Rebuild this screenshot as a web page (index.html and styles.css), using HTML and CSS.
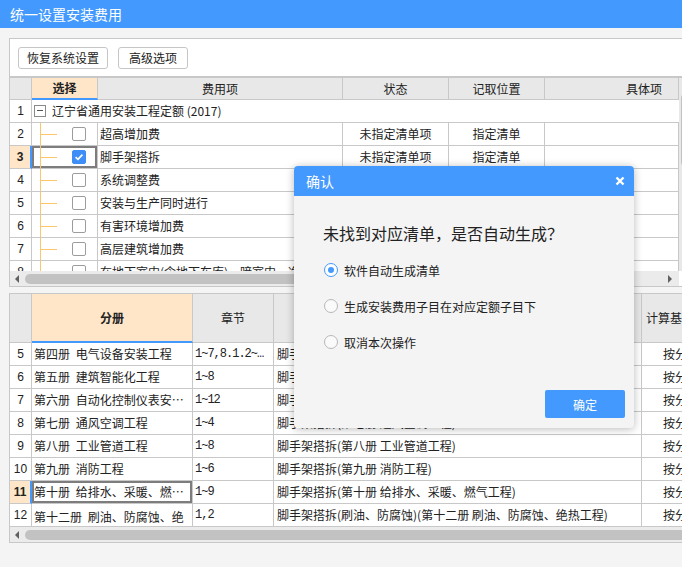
FILE: index.html
```html
<!DOCTYPE html>
<html lang="zh-CN">
<head>
<meta charset="utf-8">
<title>统一设置安装费用</title>
<link rel="stylesheet" href="styles.css">
</head>
<body>
<div class="titlebar">统一设置安装费用</div>
<div class="main">
  <section class="panel">
    <div class="toolbar">
      <button class="btn btn-wide">恢复系统设置</button>
      <button class="btn btn-narrow">高级选项</button>
    </div>
    <div class="grid-wrap top-wrap">
      <div class="grid top-grid">
        <div class="c h"></div>
        <div class="c h h-sel">选择</div>
        <div class="c h">费用项</div>
        <div class="c h">状态</div>
        <div class="c h">记取位置</div>
        <div class="c h h-right">具体项</div>

        <div class="c num">1</div>
        <div class="c span-row"><span class="minus"></span><span class="root-text">辽宁省通用安装工程定额 (2017)</span></div>

        <div class="c num">2</div>
        <div class="c tree"><span class="cb"></span></div>
        <div class="c name">超高增加费</div>
        <div class="c mid">未指定清单项</div>
        <div class="c mid">指定清单</div>
        <div class="c"></div>

        <div class="c num num-sel">3</div>
        <div class="c tree cell-sel"><span class="cb cb-on"><svg viewBox="0 0 14 14" width="12" height="12"><path d="M3 7.2 L5.8 9.8 L11 4.2" stroke="#fff" stroke-width="2" fill="none"/></svg></span></div>
        <div class="c name">脚手架搭拆</div>
        <div class="c mid">未指定清单项</div>
        <div class="c mid">指定清单</div>
        <div class="c"></div>

        <div class="c num">4</div>
        <div class="c tree"><span class="cb"></span></div>
        <div class="c name">系统调整费</div>
        <div class="c mid"></div>
        <div class="c mid"></div>
        <div class="c"></div>

        <div class="c num">5</div>
        <div class="c tree"><span class="cb"></span></div>
        <div class="c name">安装与生产同时进行</div>
        <div class="c mid"></div>
        <div class="c mid"></div>
        <div class="c"></div>

        <div class="c num">6</div>
        <div class="c tree"><span class="cb"></span></div>
        <div class="c name">有害环境增加费</div>
        <div class="c mid"></div>
        <div class="c mid"></div>
        <div class="c"></div>

        <div class="c num">7</div>
        <div class="c tree"><span class="cb"></span></div>
        <div class="c name">高层建筑增加费</div>
        <div class="c mid"></div>
        <div class="c mid"></div>
        <div class="c"></div>

        <div class="c num">8</div>
        <div class="c tree"><span class="cb"></span></div>
        <div class="c name">在地下室内(含地下车库)、暗室内、净高小于1.6m楼层</div>
        <div class="c mid"></div>
        <div class="c mid"></div>
        <div class="c"></div>
      </div>
      <div class="vscroll"><span class="v-up"></span><span class="v-thumb"></span></div>
    </div>
    <div class="hscroll top-h">
      <span class="arr-l"></span>
      <span class="h-thumb top-thumb"></span>
      <span class="h-fill"></span>
      <span class="arr-r"></span>
    </div>
  </section>

  <section class="panel bottom-panel">
    <div class="grid-wrap bottom-wrap">
      <div class="grid bottom-grid">
        <div class="c h"></div>
        <div class="c h h-sel">分册</div>
        <div class="c h">章节</div>
        <div class="c h">费用名称</div>
        <div class="c h h-left">计算基数</div>

        <div class="c num">5</div>
        <div class="c vol">第四册 电气设备安装工程</div>
        <div class="c chap">1~7,8.1.2~8.1.5,9~14</div>
        <div class="c fee">脚手架搭拆(第四册 电气设备安装工程)</div>
        <div class="c base">按分册计算</div>

        <div class="c num">6</div>
        <div class="c vol">第五册 建筑智能化工程</div>
        <div class="c chap">1~8</div>
        <div class="c fee">脚手架搭拆(第五册 建筑智能化工程)</div>
        <div class="c base">按分册计算</div>

        <div class="c num">7</div>
        <div class="c vol">第六册 自动化控制仪表安装工程</div>
        <div class="c chap">1~12</div>
        <div class="c fee">脚手架搭拆(第六册 自动化控制仪表安装工程)</div>
        <div class="c base">按分册计算</div>

        <div class="c num">8</div>
        <div class="c vol">第七册 通风空调工程</div>
        <div class="c chap">1~4</div>
        <div class="c fee">脚手架搭拆(第七册 通风空调工程)</div>
        <div class="c base">按分册计算</div>

        <div class="c num">9</div>
        <div class="c vol">第八册 工业管道工程</div>
        <div class="c chap">1~8</div>
        <div class="c fee">脚手架搭拆(第八册 工业管道工程)</div>
        <div class="c base">按分册计算</div>

        <div class="c num">10</div>
        <div class="c vol">第九册 消防工程</div>
        <div class="c chap">1~6</div>
        <div class="c fee">脚手架搭拆(第九册 消防工程)</div>
        <div class="c base">按分册计算</div>

        <div class="c num num-sel">11</div>
        <div class="c vol cell-sel">第十册 给排水、采暖、燃气工程</div>
        <div class="c chap">1~9</div>
        <div class="c fee">脚手架搭拆(第十册 给排水、采暖、燃气工程)</div>
        <div class="c base">按分册计算</div>

        <div class="c num">12</div>
        <div class="c vol vol-wrap">第十二册 刷油、防腐蚀、绝热工程</div>
        <div class="c chap">1,2</div>
        <div class="c fee">脚手架搭拆(刷油、防腐蚀)(第十二册 刷油、防腐蚀、绝热工程)</div>
        <div class="c base">按分册计算</div>
      </div>
    </div>
    <div class="hscroll bottom-h">
      <span class="arr-l"></span>
      <span class="h-thumb bottom-thumb"></span>
    </div>
  </section>
</div>

<div class="dialog">
  <div class="dlg-head">
    <span class="dlg-title">确认</span>
    <svg class="dlg-close" viewBox="0 0 10 10" width="10" height="10"><path d="M1.5 1.5 L8.5 8.5 M8.5 1.5 L1.5 8.5" stroke="#fff" stroke-width="2.4" fill="none"/></svg>
  </div>
  <div class="dlg-body">
    <p class="dlg-q">未找到对应清单，是否自动生成？</p>
    <ul class="dlg-opts">
      <li class="opt"><span class="radio radio-on"></span>软件自动生成清单</li>
      <li class="opt"><span class="radio"></span>生成安装费用子目在对应定额子目下</li>
      <li class="opt"><span class="radio"></span>取消本次操作</li>
    </ul>
  </div>
  <div class="dlg-foot"><button class="dlg-ok">确定</button></div>
</div>
</body>
</html>
```
FILE: styles.css
```css
* { box-sizing: border-box; }
html, body { margin: 0; padding: 0; }
body {
  width: 682px;
  height: 567px;
  overflow: hidden;
  position: relative;
  background: #f4f4f4;
  font-family: "Noto Sans CJK SC", "Liberation Sans", sans-serif;
  font-size: 12px;
  color: #222;
}
.titlebar {
  height: 28px;
  background: #4399fd;
  color: #fff;
  font-size: 14px;
  line-height: 28px;
  padding-left: 10px;
}
.main {
  width: 820px;
  padding: 10px 0 0 9px;
}
.panel {
  background: #fff;
  border: 1px solid #c8c8c8;
  border-right: none;
}
.bottom-panel { margin-top: 6px; }

.toolbar {
  height: 39px;
  padding: 8px 0 0 8px;
  display: flex;
  gap: 10px;
  border-bottom: 2px solid #c8c8c8;
}
.btn {
  height: 22px;
  padding: 0;
  border: 1px solid #c6c6c6;
  border-radius: 3px;
  background: #fff;
  font-family: inherit;
  font-size: 12px;
  color: #222;
  line-height: 20px;
}
.btn-wide { width: 90px; }
.btn-narrow { width: 70px; }

.grid-wrap { display: flex; overflow: hidden; }
.top-wrap { height: 193px; }
.bottom-wrap { height: 233px; }
.grid { display: grid; align-content: start; flex: none; }
.top-grid {
  grid-template-columns: 22px 66px 245px 106px 96px 134px;
  grid-template-rows: 22px;
  grid-auto-rows: 23px;
}
.bottom-grid {
  grid-template-columns: 22px 161px 81px 368px 140px;
  grid-template-rows: 49px;
  grid-auto-rows: 23px;
}
.c {
  border-right: 1px solid #c8c8c8;
  border-bottom: 1px solid #c8c8c8;
  display: flex;
  align-items: center;
  white-space: nowrap;
  overflow: hidden;
  line-height: 16px;
  background: #fff;
}
.h {
  background: #e8e8e8;
  justify-content: center;
}
.h-sel {
  background: #ffe6c9;
  font-weight: bold;
  border-bottom: 2px solid #4499fe;
}
.h-right { justify-content: flex-end; padding-right: 16px; }
.h-left { justify-content: flex-start; padding-left: 4px; }

.num { justify-content: center; font-family: "Liberation Sans", sans-serif; }
.num-sel {
  background: #ffe6c9;
  font-weight: bold;
  border-right: 2px solid #4499fe;
}
.cell-sel { box-shadow: inset 0 0 0 2px #7d7d7d; }

.span-row { grid-column: 2 / -1; border-right: none; padding-left: 2px; }
.minus {
  width: 12px;
  height: 12px;
  border: 1px solid #8a8a8a;
  position: relative;
  flex: none;
}
.minus::after {
  content: "";
  position: absolute;
  left: 2px;
  right: 2px;
  top: 4px;
  height: 1px;
  background: #555;
}
.root-text { margin-left: 6px; }

.tree { position: relative; padding-left: 40px; }
.tree::before {
  content: "";
  position: absolute;
  left: 8px;
  top: 0;
  bottom: -1px;
  width: 1px;
  background: #fdc56c;
}
.tree::after {
  content: "";
  position: absolute;
  left: 8px;
  top: 11px;
  width: 17px;
  height: 1px;
  background: #fdc56c;
}
.cb {
  width: 14px;
  height: 14px;
  border: 1px solid #9c9c9c;
  border-radius: 2px;
  background: #fff;
  flex: none;
  display: flex;
  align-items: center;
  justify-content: center;
}
.cb-on { background: #3d8ef6; border-color: #3d8ef6; }
.name { padding-left: 2px; }
.mid { justify-content: center; }

.vscroll {
  width: 14px;
  flex: none;
  background: #e8e8e8;
  display: flex;
  flex-direction: column;
  align-items: center;
}
.v-up {
  margin-top: 7px;
  width: 0;
  height: 0;
  border-left: 4px solid transparent;
  border-right: 4px solid transparent;
  border-bottom: 4px solid #606060;
}
.v-thumb {
  margin-top: 4px;
  width: 10px;
  height: 74px;
  border-radius: 5px;
  background: #c2c2c2;
}

.hscroll {
  height: 15px;
  background: #ebebeb;
  display: flex;
  align-items: center;
}
.top-h { width: 669px; }
.arr-l, .arr-r {
  flex: none;
  height: 15px;
  display: flex;
  align-items: center;
  justify-content: center;
}
.arr-l { width: 14px; }
.arr-r { width: 18px; }
.arr-l::before, .arr-r::before {
  content: "";
  width: 0;
  height: 0;
  border-top: 4px solid transparent;
  border-bottom: 4px solid transparent;
}
.arr-l::before { border-right: 4px solid #606060; }
.arr-r::before { border-left: 4px solid #606060; }
.h-thumb {
  margin-left: 1px;
  height: 10px;
  border-radius: 5px;
  background: #c2c2c2;
}
.top-thumb { width: 540px; }
.bottom-thumb { flex: 1; }
.h-fill { flex: 1; }

.vol { padding-left: 2px; word-spacing: 3px; }
.vol:not(.vol-wrap) { text-overflow: ellipsis; display: block; line-height: 22px; }
.vol-wrap {
  display: block;
  white-space: normal;
  line-height: 18px;
  padding-top: 4px;
}
.chap {
  display: block;
  line-height: 22px;
  padding: 0 4px 0 2px;
  text-overflow: ellipsis;
  font-family: "Liberation Mono", monospace;
  font-size: 12px;
  letter-spacing: -1px;
}
.fee { padding-left: 3px; }
.base { padding-left: 21px; }

.dialog {
  position: absolute;
  left: 294px;
  top: 166px;
  width: 340px;
  height: 262px;
  background: #f4f4f4;
  border-radius: 4px;
  box-shadow: 0 1px 8px rgba(0, 0, 0, 0.28);
  display: flex;
  flex-direction: column;
  overflow: hidden;
}
.dlg-head {
  height: 30px;
  flex: none;
  background: #4499fe;
  color: #fff;
  font-size: 14px;
  display: flex;
  align-items: center;
  justify-content: space-between;
  padding: 0 9px 0 12px;
}
.dlg-body { padding: 27px 0 0 29px; }
.dlg-q {
  margin: 0;
  font-size: 16px;
  line-height: 20px;
  color: #222;
}
.dlg-opts {
  list-style: none;
  margin: 9px 0 0;
  padding: 0;
}
.opt {
  height: 36px;
  display: flex;
  align-items: center;
  gap: 6px;
  padding-left: 1px;
  font-size: 12px;
}
.radio {
  width: 14px;
  height: 14px;
  border-radius: 50%;
  border: 1px solid #b8b8b8;
  background: #fafafa;
  flex: none;
  display: flex;
  align-items: center;
  justify-content: center;
}
.radio-on { border-color: #4499fe; background: #fff; }
.radio-on::after {
  content: "";
  width: 6px;
  height: 6px;
  border-radius: 50%;
  background: #4499fe;
}
.dlg-foot {
  margin-top: auto;
  display: flex;
  justify-content: flex-end;
  padding: 0 9px 10px;
}
.dlg-ok {
  width: 80px;
  height: 28px;
  border: none;
  border-radius: 2px;
  background: #4499fe;
  color: #fff;
  font-family: inherit;
  font-size: 12px;
}
```
